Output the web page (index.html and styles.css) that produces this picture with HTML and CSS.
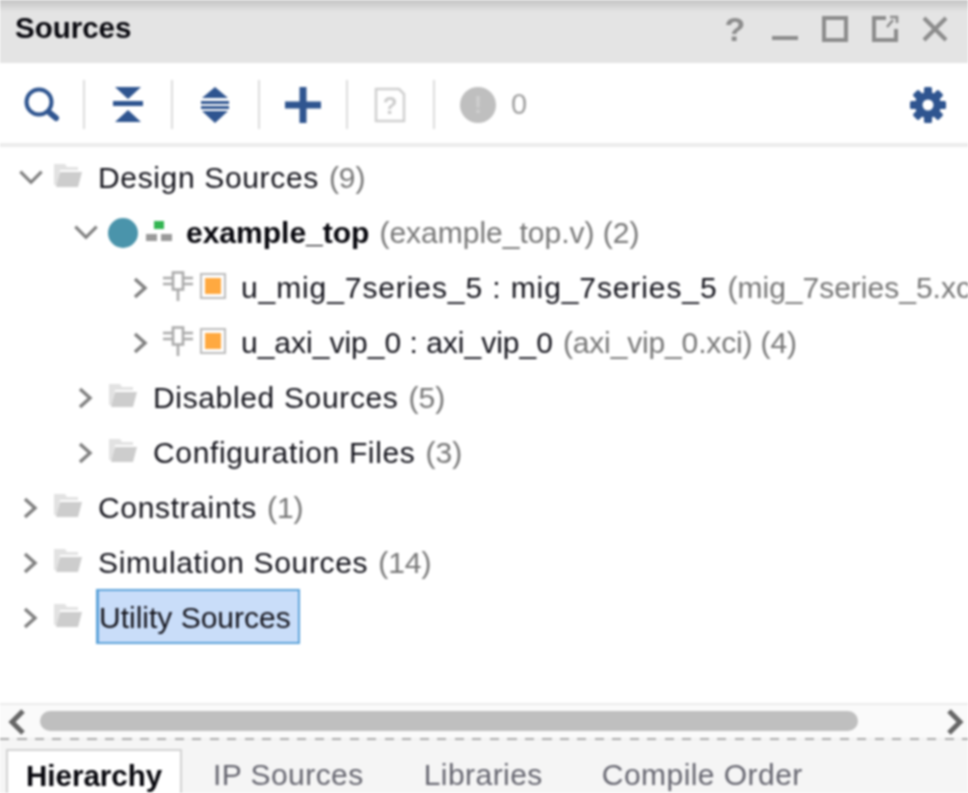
FILE: index.html
```html
<!DOCTYPE html>
<html>
<head>
<meta charset="utf-8">
<title>Sources</title>
<link rel="stylesheet" href="styles.css">
</head>
<body>
<svg class="defs" width="0" height="0">
	<defs>
		<symbol id="folder" viewBox="0 0 30 25">
			<path d="M1 1h11l2 3h11v3H7L4 22H1z" fill="#e2e2e2"/>
			<path d="M7 9h22l-4 15H3z" fill="#cdcdcd"/>
		</symbol>
		<symbol id="right" viewBox="0 0 16 22">
			<path d="M2.500 2l10 9-10 9" fill="none" stroke="#808080" stroke-width="3.400"/>
		</symbol>
		<symbol id="down" viewBox="0 0 24 16">
			<path d="M2 2.500l10 10 10-10" fill="none" stroke="#808080" stroke-width="3"/>
		</symbol>
		<symbol id="inst" viewBox="0 0 30 30">
			<path d="M10 1.500h10v17H10zM15 18.500V30M0 7h10M0 13h10M20 7h10M20 13h10" fill="none" stroke="#aaa" stroke-width="2.600"/>
		</symbol>
	</defs>
</svg>
<div id="panel">
	<div class="titlebar">
		<span class="title">Sources</span>
		<div class="winbtns">
			<span class="winbtn help">?</span>
			<svg class="winbtn" viewBox="0 0 50 56"><path d="M12 38h26" stroke="#8c8c8c" stroke-width="4"/></svg>
			<svg class="winbtn" viewBox="0 0 50 56"><path d="M14 18h22v22H14z" fill="none" stroke="#8c8c8c" stroke-width="4"/></svg>
			<svg class="winbtn" viewBox="0 0 50 56"><path d="M26 18H14v22h22V29" fill="none" stroke="#8c8c8c" stroke-width="4"/><path d="M27 27l6-7M30 17h7v6" fill="none" stroke="#8c8c8c" stroke-width="2.500"/></svg>
			<svg class="winbtn" viewBox="0 0 50 56"><path d="M14 18l22 22M36 18L14 40" stroke="#8c8c8c" stroke-width="4"/></svg>
		</div>
	</div>

	<div class="toolbar">
		<div class="tool first">
			<svg width="38" height="36" viewBox="0 0 38 36"><circle cx="16" cy="15" r="12.500" fill="none" stroke="#2f5590" stroke-width="4"/><path d="M27 26l6 5" stroke="#2f5590" stroke-width="6" stroke-linecap="round"/></svg>
		</div>
		<div class="tool">
			<svg width="32" height="36" viewBox="0 0 32 36"><path d="M3 0h26L16 12zM3 35h26L16 23z" fill="#2f5590"/><path d="M1 14h30v5H1z" fill="#2f5590"/></svg>
		</div>
		<div class="tool">
			<svg width="30" height="36" viewBox="0 0 30 36"><path d="M15 0l13 11H2zM2 24h26L15 36z" fill="#2f5590"/><path d="M1 14h28v3H1zM1 19h28v3H1z" fill="#2f5590"/></svg>
		</div>
		<div class="tool">
			<svg width="36" height="36" viewBox="0 0 36 36"><path d="M0 14.500h36v7H0zM14.500 0h7v36h-7z" fill="#2f5590"/></svg>
		</div>
		<div class="tool">
			<svg width="32" height="36" viewBox="0 0 32 36"><path d="M2 2h23l5 5v27H2z" fill="none" stroke="#d0d0d0" stroke-width="2.500"/><text x="16" y="27" class="docq">?</text></svg>
		</div>
		<div class="tool last">
			<span class="badge">!</span>
			<span class="count">0</span>
		</div>
		<svg class="gear" width="36" height="36" viewBox="-18 -18 36 36">
			<g fill="#2f5590">
				<rect x="-4" y="-18" width="8" height="36" rx="1.500"/>
				<rect x="-4" y="-18" width="8" height="36" rx="1.500" transform="rotate(45)"/>
				<rect x="-4" y="-18" width="8" height="36" rx="1.500" transform="rotate(90)"/>
				<rect x="-4" y="-18" width="8" height="36" rx="1.500" transform="rotate(135)"/>
				<circle r="13"/>
			</g>
			<circle r="5.500" fill="#fff"/>
		</svg>
	</div>

	<div class="tree">
		<div class="row lvl0">
			<svg class="twist" viewBox="0 0 24 16"><use href="#down"/></svg>
			<svg class="folder"><use href="#folder"/></svg>
			<span class="name loose">Design Sources</span><span class="extra">(9)</span>
		</div>
		<div class="row lvl1">
			<svg class="twist" viewBox="0 0 24 16"><use href="#down"/></svg>
			<span class="dot"></span>
			<svg class="hier" width="27" height="21" viewBox="0 0 27 21"><path d="M8 0h10v8H8z" fill="#33b552"/><path d="M0 13h11v7H0zM15 13h11v7H15z" fill="#9a9a9a"/></svg>
			<span class="name top">example_top</span><span class="extra">(example_top.v) (2)</span>
		</div>
		<div class="row lvl2">
			<svg class="twist small" viewBox="0 0 16 22"><use href="#right"/></svg>
			<svg class="inst"><use href="#inst"/></svg>
			<span class="ipbox"><i></i></span>
			<span class="name wide">u_mig_7series_5 : mig_7series_5</span><span class="extra">(mig_7series_5.xci) (5)</span>
		</div>
		<div class="row lvl2">
			<svg class="twist small" viewBox="0 0 16 22"><use href="#right"/></svg>
			<svg class="inst"><use href="#inst"/></svg>
			<span class="ipbox"><i></i></span>
			<span class="name">u_axi_vip_0 : axi_vip_0</span><span class="extra tight">(axi_vip_0.xci) (4)</span>
		</div>
		<div class="row lvl1">
			<svg class="twist small" viewBox="0 0 16 22"><use href="#right"/></svg>
			<svg class="folder"><use href="#folder"/></svg>
			<span class="name loose">Disabled Sources</span><span class="extra">(5)</span>
		</div>
		<div class="row lvl1">
			<svg class="twist small" viewBox="0 0 16 22"><use href="#right"/></svg>
			<svg class="folder"><use href="#folder"/></svg>
			<span class="name loose">Configuration Files</span><span class="extra">(3)</span>
		</div>
		<div class="row lvl0">
			<svg class="twist small" viewBox="0 0 16 22"><use href="#right"/></svg>
			<svg class="folder"><use href="#folder"/></svg>
			<span class="name loose">Constraints</span><span class="extra">(1)</span>
		</div>
		<div class="row lvl0">
			<svg class="twist small" viewBox="0 0 16 22"><use href="#right"/></svg>
			<svg class="folder"><use href="#folder"/></svg>
			<span class="name loose">Simulation Sources</span><span class="extra">(14)</span>
		</div>
		<div class="row lvl0">
			<svg class="twist small" viewBox="0 0 16 22"><use href="#right"/></svg>
			<svg class="folder"><use href="#folder"/></svg>
			<span class="name selected">Utility Sources</span>
		</div>
	</div>

	<div class="hscroll">
		<svg class="arrow" width="18" height="26" viewBox="0 0 18 26"><path d="M15 2L4 13l11 11" fill="none" stroke="#666" stroke-width="5"/></svg>
		<div class="thumb"></div>
		<svg class="arrow" width="18" height="26" viewBox="0 0 18 26"><path d="M3 2l11 11L3 24" fill="none" stroke="#666" stroke-width="5"/></svg>
	</div>
	<div class="dashes"></div>

	<div class="tabs">
		<div class="tab active">Hierarchy</div>
		<div class="tab">IP Sources</div>
		<div class="tab">Libraries</div>
		<div class="tab">Compile Order</div>
	</div>
</div>
</body>
</html>
```
FILE: styles.css
```css
html, body {
	margin: 0;
	height: 793px;
	overflow: hidden;
	background-color: #fff;
}
.defs {
	display: block;
	height: 0;
}
#panel {
	height: 793px;
	display: flex;
	flex-direction: column;
	font-family: "Liberation Sans", Arial, sans-serif;
	font-size: 30px;
	color: #14141c;
	filter: blur(0.8px);
	overflow: hidden;
}

/* title bar */
.titlebar {
	flex: 0 0 63px;
	display: flex;
	align-items: flex-start;
	justify-content: space-between;
	background: linear-gradient(#c4c4c4 0, #e4e4e4 12px);
	padding: 0 8px 0 15px;
	box-sizing: border-box;
}
.title {
	font-weight: bold;
	font-size: 29.500px;
	line-height: 56px;
	color: #08080e;
}
.winbtns {
	display: flex;
}
.winbtn {
	width: 50px;
	height: 56px;
	display: block;
}
.winbtn.help {
	font-weight: bold;
	font-size: 34px;
	line-height: 58px;
	text-align: center;
	color: #8c8c8c;
}

/* toolbar */
.toolbar {
	flex: 0 0 84px;
	display: flex;
	align-items: center;
	padding: 3px 22px 0 0;
	box-sizing: border-box;
	background-color: #fff;
	border-bottom: 4px solid #ececec;
}
.tool {
	width: 85.500px;
	height: 49px;
	border-right: 2px solid #dcdcdc;
	display: flex;
	align-items: center;
	justify-content: center;
}
.tool.first {
	width: 83px;
}
.tool.last {
	border-right: none;
	justify-content: flex-start;
	padding-left: 25px;
	width: auto;
}
.docq {
	font-family: "Liberation Sans", Arial, sans-serif;
	font-size: 24px;
	font-weight: bold;
	text-anchor: middle;
	fill: #cdcdcd;
}
.badge {
	width: 36px;
	height: 36px;
	border-radius: 50%;
	background-color: #bfbfbf;
	color: #cfcfcf;
	font-weight: bold;
	font-size: 24px;
	line-height: 36px;
	text-align: center;
}
.count {
	margin-left: 15px;
	color: #a0a0a0;
	font-size: 29px;
}
.gear {
	margin-left: auto;
}

/* tree */
.tree {
	flex: 1;
	min-height: 0;
	overflow: hidden;
	padding-top: 3px;
	background-color: #fff;
}
.row {
	height: 55px;
	display: flex;
	align-items: center;
	white-space: nowrap;
}
.lvl0 { padding-left: 18px; }
.lvl1 { padding-left: 73px; }
.lvl2 { padding-left: 128px; }
.twist {
	flex: none;
	width: 26px;
	height: 17px;
	margin-right: 9px;
}
.twist.small {
	width: 17px;
	height: 22px;
	margin-left: 4px;
	margin-right: 14px;
}
.folder {
	flex: none;
	width: 30px;
	height: 25px;
	margin-right: 15px;
	margin-top: -4px;
}
.dot {
	flex: none;
	width: 30px;
	height: 30px;
	border-radius: 50%;
	background-color: #4a94ab;
	margin-right: 8px;
}
.hier {
	flex: none;
	margin-right: 13px;
	margin-top: -2px;
}
.inst {
	flex: none;
	width: 30px;
	height: 30px;
	margin-right: 7px;
	margin-top: -3px;
}
.ipbox {
	flex: none;
	width: 26px;
	height: 26px;
	box-sizing: border-box;
	border: 2px solid #bdbdbd;
	padding: 3px;
	margin-right: 15px;
	margin-top: -3px;
}
.ipbox i {
	display: block;
	width: 16px;
	height: 16px;
	background-color: #ffa940;
}
.name.loose {
	letter-spacing: 0.65px;
}
.name.wide {
	letter-spacing: 0.9px;
}
.name.top {
	font-weight: bold;
	color: #08080e;
}
.extra {
	margin-left: 10px;
	color: #777;
}
.extra.tight {
	letter-spacing: -0.15px;
}
.name.selected {
	height: 55px;
	line-height: 53px;
	box-sizing: border-box;
	margin: -3px 0 0 -2px;
	padding: 0 7px 0 0;
	background-color: #c9ddf9;
	border: 2px solid #5da3da;
	border-left-width: 3px;
}

/* bottom scroller */
.hscroll {
	flex: 0 0 35px;
	box-sizing: border-box;
	display: flex;
	align-items: center;
	background-color: #fafafa;
	border-top: 2px solid #ececec;
	padding: 0 4px 0 8px;
}
.thumb {
	width: 818px;
	height: 20px;
	border-radius: 10px;
	background-color: #bfbfbf;
	margin: -2px 88px 0 14px;
}
.dashes {
	flex: 0 0 2px;
	background: repeating-linear-gradient(90deg, #aaa 0, #aaa 9px, #f2f2f2 9px, #f2f2f2 17.500px);
}

/* tabs */
.tabs {
	flex: 0 0 53px;
	min-height: 0;
	overflow: hidden;
	box-sizing: border-box;
	display: flex;
	align-items: flex-start;
	background-color: #f5f5f5;
	padding: 9px 0 0 6px;
}
.tab {
	padding: 0 29px 0 31px;
	height: 52px;
	line-height: 52px;
	color: #666670;
	letter-spacing: 0.45px;
	white-space: nowrap;
}
.tab:last-child {
	margin-left: -1px;
}
.tab.active {
	box-sizing: border-box;
	width: 176px;
	padding: 0 0 0 18px;
	background-color: #fff;
	border: 2px solid #d2d2d2;
	border-bottom: none;
	font-weight: bold;
	font-size: 29.500px;
	letter-spacing: 0;
	color: #08080e;
	line-height: 50px;
}
```
